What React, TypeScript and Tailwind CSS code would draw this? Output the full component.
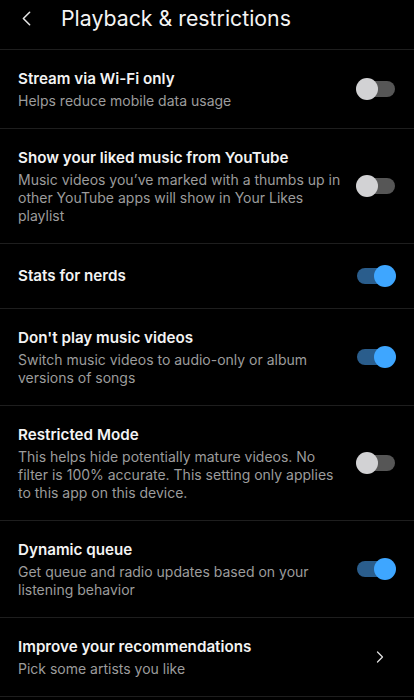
import { ChevronLeft, ChevronRight } from "lucide-react";

type Row = {
  title: string;
  sub?: string;
  on?: boolean;
  link?: boolean;
};

const rows: Row[] = [
  { title: "Stream via Wi-Fi only", sub: "Helps reduce mobile data usage", on: false },
  {
    title: "Show your liked music from YouTube",
    sub: "Music videos you\u2019ve marked with a thumbs up in other YouTube apps will show in Your Likes playlist",
    on: false,
  },
  { title: "Stats for nerds", on: true },
  {
    title: "Don't play music videos",
    sub: "Switch music videos to audio-only or album versions of songs",
    on: true,
  },
  {
    title: "Restricted Mode",
    sub: "This helps hide potentially mature videos. No filter is 100% accurate. This setting only applies to this app on this device.",
    on: false,
  },
  {
    title: "Dynamic queue",
    sub: "Get queue and radio updates based on your listening behavior",
    on: true,
  },
  { title: "Improve your recommendations", sub: "Pick some artists you like", link: true },
];

function Toggle({ on }: { on: boolean }) {
  return (
    <div className="relative w-[40px] h-[22px] flex items-center shrink-0">
      <div
        className={`w-[38px] h-[16px] ml-[1px] rounded-full ${on ? "bg-[#2a5d8c]" : "bg-[#565656]"}`}
      />
      <div
        className={`absolute top-0 w-[22px] h-[22px] rounded-full ${
          on ? "right-0 bg-[#3ea6ff]" : "left-0 bg-[#d2d2d4]"
        }`}
      />
    </div>
  );
}

export default function App() {
  return (
    <div className="min-h-[700px] bg-black text-[#f1f1f1] font-['Inter',sans-serif]">
      {/* Header */}
      <div className="h-[50px] flex items-start border-b border-[#1e1e1e]">
        <div className="flex items-center h-[36px] pl-[14px]">
          <ChevronLeft className="w-[25px] h-[25px] text-[#e6e6e6]" strokeWidth={1.5} />
          <h1 className="ml-[22px] text-[21.3px] leading-[30px] text-[#f4f4f4]">
            Playback &amp; restrictions
          </h1>
        </div>
      </div>

      {rows.map((r) => (
        <div
          key={r.title}
          className={`flex items-center justify-between pl-[18px] pr-[18px] border-b border-[#1e1e1e] ${
            r.sub ? "py-[18.5px]" : "min-h-[65px]"
          }`}
        >
          <div className="flex flex-col gap-[3px] w-[330px]">
            <div className="text-[15.2px] leading-[20px] font-semibold text-[#f3f3f3]">{r.title}</div>
            {r.sub && (
              <div className="text-[14px] leading-[18px] text-[#9c9c9c]">{r.sub}</div>
            )}
          </div>
          {r.link ? (
            <ChevronRight className="w-[20px] h-[20px] text-[#e0e0e0] mr-[6px]" strokeWidth={1.5} />
          ) : (
            <Toggle on={!!r.on} />
          )}
        </div>
      ))}
    </div>
  );
}
